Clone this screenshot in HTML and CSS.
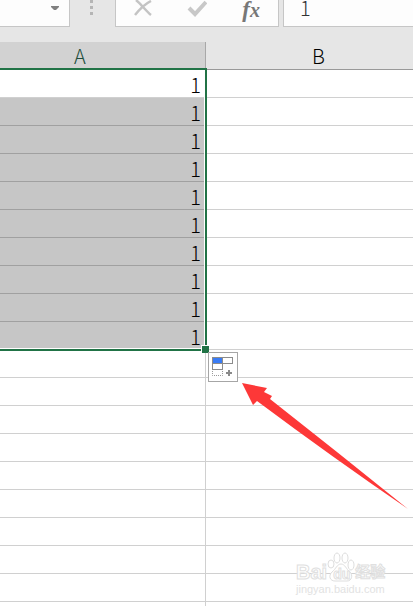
FILE: index.html
```
<!DOCTYPE html>
<html lang="zh-CN">
<head>
<meta charset="utf-8">
<title>Sheet</title>
<link rel="stylesheet" href="styles.css">
</head>
<body>
<header class="formula-bar">
  <button class="name-box" type="button" aria-label="Name box">
    <svg width="8" height="5" viewBox="0 0 8 5"><path d="M0 0h8v1L5 4H3L0 1z" fill="#808080"/></svg>
  </button>
  <div class="grip"><i></i><i></i><i></i></div>
  <div class="actions">
    <button type="button" aria-label="Cancel"><svg width="18" height="18" viewBox="0 0 18 18"><path d="M2 0c5 4 10 11 15 15M17 1C11 4 5 10 1 15" fill="none" stroke="#c4c4c4" stroke-width="2.500"/></svg></button>
    <button type="button" aria-label="Enter"><svg width="20" height="18" viewBox="0 0 20 18"><path d="M2 8l6 6L19 2" fill="none" stroke="#c8c8c8" stroke-width="4"/></svg></button>
    <button class="fx" type="button" aria-label="Insert function"><span class="fx-f">f</span><span class="fx-x">x</span></button>
  </div>
  <input class="formula" type="text" value="1" aria-label="Formula">
</header>
<main class="sheet">
  <table>
    <colgroup><col class="col-a"><col></colgroup>
    <thead><tr><th class="active" scope="col">A</th><th scope="col">B</th></tr></thead>
    <tbody>
      <tr><td>1</td><td></td></tr>
      <tr class="picked"><td>1</td><td></td></tr>
      <tr class="picked"><td>1</td><td></td></tr>
      <tr class="picked"><td>1</td><td></td></tr>
      <tr class="picked"><td>1</td><td></td></tr>
      <tr class="picked"><td>1</td><td></td></tr>
      <tr class="picked"><td>1</td><td></td></tr>
      <tr class="picked"><td>1</td><td></td></tr>
      <tr class="picked"><td>1</td><td></td></tr>
      <tr class="picked"><td>1</td><td></td></tr>
      <tr><td></td><td></td></tr>
      <tr><td></td><td></td></tr>
      <tr><td></td><td></td></tr>
      <tr><td></td><td></td></tr>
      <tr><td></td><td></td></tr>
      <tr><td></td><td></td></tr>
      <tr><td></td><td></td></tr>
      <tr><td></td><td></td></tr>
      <tr><td></td><td></td></tr>
      <tr><td></td><td></td></tr>
    </tbody>
  </table>
  <div class="selection"><span class="handle"></span></div>
  <button class="fill-options" type="button" aria-label="Auto fill options">
    <svg width="28" height="28" viewBox="0 0 28 28">
      <rect x="3.500" y="4.500" width="10" height="6" fill="#3a7cf5" stroke="#8c8c8c"/>
      <rect x="13.500" y="4.500" width="10" height="6" fill="#fff" stroke="#8c8c8c"/>
      <rect x="3.500" y="10.500" width="10" height="6" fill="#fff" stroke="#8c8c8c"/>
      <path d="M3.500 18v4.500h10V18" fill="none" stroke="#999" stroke-dasharray="1 1"/>
      <path d="M17 20h6M20 17v6" stroke="#8a8a8a" stroke-width="2"/>
    </svg>
  </button>
  <svg class="arrow" width="166" height="127" viewBox="0 0 166 127"><path d="M0 0L25 5L22 9L30 13L28 16Q98 71 166 126Q90 74 15 18L11 22z" fill="#fd3838"/></svg>
  <div class="watermark">
    <div class="brand"><span>Bai</span><span class="paw"><svg width="28" height="30" viewBox="0 0 28 30"><g fill="#fff" stroke="#dedede"><ellipse cx="4" cy="12" rx="3" ry="4"/><ellipse cx="10" cy="6" rx="3" ry="5"/><ellipse cx="18" cy="6" rx="3" ry="5"/><ellipse cx="24" cy="13" rx="3" ry="5"/><path d="M14 12c4 0 5 5 9 8 3 3 2 9-3 9H8c-5 0-7-5-3-9 4-3 5-8 9-8z"/></g></svg><b>du</b></span><span class="cn">经验</span></div>
    <div class="site">jingyan.baidu.com</div>
  </div>
</main>
</body>
</html>
```
FILE: styles.css
```
* { box-sizing: border-box; }

body {
  margin: 0;
  height: 100vh;
  overflow: hidden;
  display: flex;
  flex-direction: column;
  background: #fff;
  color: #000;
  font-family: "Noto Sans CJK SC", sans-serif;
  font-size: 20px;
  font-weight: 300;
}

button { padding: 0; border: 0; background: none; font: inherit; }
svg { display: block; }

.formula-bar {
  flex: none;
  display: flex;
  align-items: flex-start;
  height: 42px;
  background: #e6e6e6;
}

.name-box,
.actions,
.formula {
  height: 27px;
  background: #fdfdfd;
  border: 0 solid #c6c6c6;
  border-bottom-width: 1px;
}

.name-box {
  width: 70px;
  padding: 6px 10px 0 0;
  border-right-width: 1px;
  display: flex;
  align-items: flex-start;
  justify-content: flex-end;
}

.grip {
  width: 45px;
  padding-left: 20px;
  display: flex;
  flex-direction: column;
  gap: 3px;
}
.grip i { width: 3px; height: 3px; background: #b5b5b5; }

.actions {
  width: 164px;
  padding: 0 18px;
  border-left-width: 1px;
  border-right-width: 1px;
  display: flex;
  align-items: flex-start;
  justify-content: space-between;
}

.fx {
  height: 20px;
  color: #777;
  font-family: "Liberation Serif", serif;
  font-style: italic;
  font-weight: 700;
  line-height: 16px;
}
.fx-f { font-size: 23px; }
.fx-x { font-size: 20px; }

.formula {
  flex: 1;
  min-width: 0;
  margin-left: 4px;
  padding: 0 0 12px 16px;
  border-left-width: 1px;
  border-radius: 0;
  color: #333;
  font: inherit;
  line-height: 14px;
}

.sheet { flex: 1; position: relative; overflow: hidden; }

table { width: 100%; table-layout: fixed; border-collapse: separate; border-spacing: 0; }
.col-a { width: 206px; }

th,
td {
  height: 28px;
  padding: 1px 0 0;
  line-height: 26px;
  font-weight: 300;
  border-right: 1px solid #d0d0d0;
  border-bottom: 1px solid #d0d0d0;
}
th { padding-left: 18px; background: #e6e6e6; border-bottom-color: #999; }
th:first-child { padding: 1px 45px 0 0; }
th:last-child, td:last-child { border-right: 0; }
.active { background: #d2d2d2; color: #1e4e3c; border-right-color: #a8a8a8; }
td { padding: 2px 4px 0 0; line-height: 25px; text-align: right; }
.picked td:first-child { background: #c6c6c6; border-bottom-color: #a0a0a0; }

.selection {
  position: absolute;
  top: 26px;
  left: 0;
  width: 207px;
  height: 283px;
  border: 2px solid #217346;
  border-left: 0;
  box-shadow: inset -1px -1px #fff;
}
.handle {
  position: absolute;
  right: -4px;
  bottom: -4px;
  width: 8px;
  height: 8px;
  background: #217346;
  border: solid #fff;
  border-width: 1px 0 0 1px;
}

.fill-options {
  position: absolute;
  top: 310px;
  left: 208px;
  width: 30px;
  height: 30px;
  background: #fff;
  border: 1px solid #a6a6a6;
}

.arrow { position: absolute; top: 341px; left: 242px; }

.watermark {
  position: absolute;
  top: 510px;
  left: 296px;
  color: #fff;
  font-family: "Liberation Sans", "Noto Sans CJK SC", sans-serif;
  font-weight: 700;
  -webkit-text-stroke: 1px #e0e0e0;
}
.brand { display: flex; align-items: flex-end; height: 30px; line-height: 20px; }
.paw { position: relative; }
.paw b { position: absolute; left: 6px; bottom: 0; font-size: 14px; line-height: 16px; }
.cn { font-size: 15px; }
.site { color: #e2e2e2; font-size: 11px; font-weight: 400; line-height: 14px; -webkit-text-stroke: 0; }
```
